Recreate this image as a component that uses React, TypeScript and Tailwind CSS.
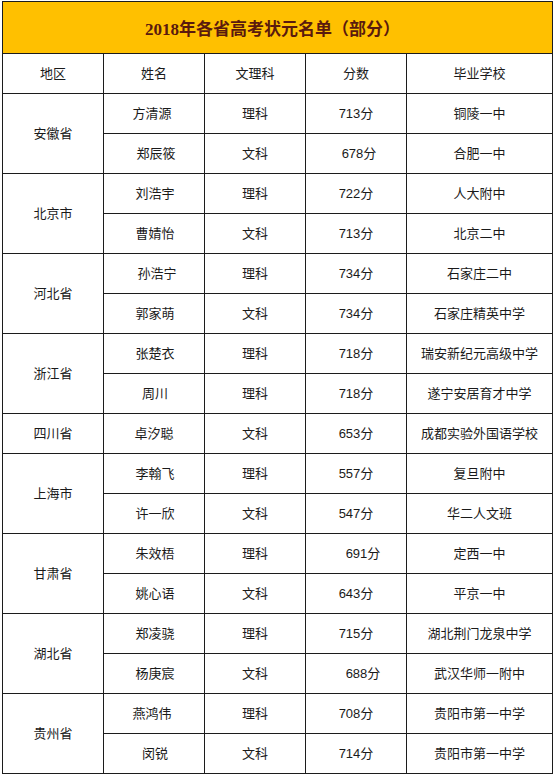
const font = { fontFamily: '"Liberation Sans", "Noto Sans CJK SC", sans-serif' }

type Student = {
  name: string
  track: string
  score: string
  school: string
  nameCls?: string
  scoreCls?: string
}

type Group = { region: string; students: Student[] }

const groups: Group[] = [
  {
    region: "安徽省",
    students: [
      { name: "方清源", track: "理科", score: "713分", school: "铜陵一中", nameCls: "pr-[4px]" },
      { name: "郑辰筱", track: "文科", score: "678分", school: "合肥一中", nameCls: "pl-[4px]", scoreCls: "pl-[6px]" },
    ],
  },
  {
    region: "北京市",
    students: [
      { name: "刘浩宇", track: "理科", score: "722分", school: "人大附中", nameCls: "pl-[2px]" },
      { name: "曹婧怡", track: "文科", score: "713分", school: "北京二中", nameCls: "pl-[2px]" },
    ],
  },
  {
    region: "河北省",
    students: [
      { name: "孙浩宁", track: "理科", score: "734分", school: "石家庄二中", nameCls: "pl-[6px]" },
      { name: "郭家萌", track: "文科", score: "734分", school: "石家庄精英中学", nameCls: "pl-[2px]" },
    ],
  },
  {
    region: "浙江省",
    students: [
      { name: "张楚衣", track: "理科", score: "718分", school: "瑞安新纪元高级中学", nameCls: "pl-[2px]" },
      { name: "周川", track: "理科", score: "718分", school: "遂宁安居育才中学", nameCls: "pl-[2px]" },
    ],
  },
  {
    region: "四川省",
    students: [{ name: "卓汐聪", track: "文科", score: "653分", school: "成都实验外国语学校" }],
  },
  {
    region: "上海市",
    students: [
      { name: "李翰飞", track: "理科", score: "557分", school: "复旦附中", nameCls: "pl-[2px]" },
      { name: "许一欣", track: "文科", score: "547分", school: "华二人文班", nameCls: "pl-[2px]" },
    ],
  },
  {
    region: "甘肃省",
    students: [
      { name: "朱效梧", track: "理科", score: "691分", school: "定西一中", nameCls: "pl-[2px]", scoreCls: "pl-[14px]" },
      { name: "姚心语", track: "文科", score: "643分", school: "平京一中", nameCls: "pl-[2px]" },
    ],
  },
  {
    region: "湖北省",
    students: [
      { name: "郑凌骁", track: "理科", score: "715分", school: "湖北荆门龙泉中学", nameCls: "pl-[2px]" },
      { name: "杨庚宸", track: "文科", score: "688分", school: "武汉华师一附中", nameCls: "pl-[2px]", scoreCls: "pl-[14px]" },
    ],
  },
  {
    region: "贵州省",
    students: [
      { name: "燕鸿伟", track: "理科", score: "708分", school: "贵阳市第一中学", nameCls: "pr-[4px]" },
      { name: "闵锐", track: "文科", score: "714分", school: "贵阳市第一中学", nameCls: "pl-[2px]" },
    ],
  },
]

const cell = "border border-[#1c1c1c] text-center align-middle p-0"

export default function App() {
  return (
    <div className="w-[556px] h-[776px] bg-white overflow-hidden pt-[1px] pl-[2px]" style={font}>
      <table className="border-collapse table-fixed w-[550px] text-[13px] text-[#1a1a1a]">
        <colgroup>
          <col className="w-[101px]" />
          <col className="w-[101px]" />
          <col className="w-[101px]" />
          <col className="w-[101px]" />
          <col className="w-[146px]" />
        </colgroup>
        <tbody>
          <tr className="h-[52px]">
            <td colSpan={5} className={`${cell} bg-[#ffc000]`}>
              <span
                className="inline-block pt-[4px] pr-[10px] text-[17px] font-bold text-[#5a1a0e]"
                style={{ fontFamily: '"Liberation Serif", "Noto Sans CJK SC", serif' }}
              >
                2018年各省高考状元名单（部分）
              </span>
            </td>
          </tr>
          <tr className="h-[40px]">
            <td className={cell}>地区</td>
            <td className={cell}>姓名</td>
            <td className={cell}>文理科</td>
            <td className={cell}>分数</td>
            <td className={cell}>毕业学校</td>
          </tr>
          {groups.map((g) =>
            g.students.map((s, i) => (
              <tr key={g.region + s.name} className="h-[40px]">
                {i === 0 && (
                  <td rowSpan={g.students.length} className={cell}>
                    {g.region}
                  </td>
                )}
                <td className={`${cell} ${s.nameCls ?? ""}`}>{s.name}</td>
                <td className={cell}>{s.track}</td>
                <td className={`${cell} ${s.scoreCls ?? ""}`}>{s.score}</td>
                <td className={cell}>{s.school}</td>
              </tr>
            ))
          )}
        </tbody>
      </table>
    </div>
  )
}
